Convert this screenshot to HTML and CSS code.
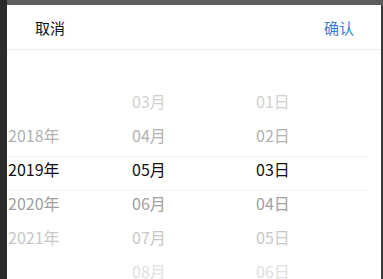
FILE: index.html
```html
<!DOCTYPE html>
<html lang="zh-CN">
<head>
    <meta charset="UTF-8">
    <meta name="viewport" content="width=device-width, initial-scale=1.0">
    <title>日期选择</title>
    <link rel="stylesheet" href="styles.css">
</head>
<body>
    <div class="frame">
        <div class="rail"></div>
        <div class="main">
            <div class="topbar"></div>
            <div class="panel">
                <div class="toolbar">
                    <a href="#" class="btn cancel">取消</a>
                    <a href="#" class="btn confirm">确认</a>
                </div>
                <div class="wheel">
                    <div class="band"></div>
                    <ul class="col col-year">
                        <li class="r-2"></li>
                        <li class="r-1">2018年</li>
                        <li class="r0">2019年</li>
                        <li class="r1">2020年</li>
                        <li class="r2">2021年</li>
                        <li class="r3"></li>
                    </ul>
                    <ul class="col">
                        <li class="r-2">03月</li>
                        <li class="r-1">04月</li>
                        <li class="r0">05月</li>
                        <li class="r1">06月</li>
                        <li class="r2">07月</li>
                        <li class="r3">08月</li>
                    </ul>
                    <ul class="col">
                        <li class="r-2">01日</li>
                        <li class="r-1">02日</li>
                        <li class="r0">03日</li>
                        <li class="r1">04日</li>
                        <li class="r2">05日</li>
                        <li class="r3">06日</li>
                    </ul>
                </div>
            </div>
        </div>
    </div>
</body>
</html>
```

FILE: styles.css
```css
html, body { margin: 0; padding: 0; height: 100%; overflow: hidden; }
body { font-family: "Noto Sans CJK SC", "Noto Sans", sans-serif; background-color: #2b2b2b; }
.frame { display: flex; height: 100%; }
.rail { width: 7px; flex-shrink: 0; background-color: #2b2b2b; }
.main { flex: 1; display: flex; flex-direction: column; background-color: #3c3c3c; }
.topbar { height: 5px; flex-shrink: 0; background-color: #5e5e5e; }
.panel { flex: 1; min-height: 0; background: white; margin-right: 2px; }

.toolbar { height: 44px; display: flex; justify-content: space-between; align-items: center; padding: 0 27px 0 28px; border-bottom: 1px solid #eeeeee; }
.btn { font-size: 15px; text-decoration: none; }
.cancel { color: #111; }
.confirm { color: #3a7bd5; }

.wheel { position: relative; display: grid; grid-template-columns: 80px 124px 124px 1fr; padding-top: 34px; }
.band { position: absolute; top: 106px; left: 1px; right: 13px; height: 33px; border-top: 1px solid #f2f2f2; border-bottom: 1px solid #f2f2f2; }
.col { list-style: none; margin: 0; padding: 0; text-align: center; }
.col-year { text-align: left; padding-left: 1px; }
.col li { height: 34px; line-height: 34px; font-size: 16px; }
.r-2 { color: #d2d2d2; }
.r-1 { color: #b2b2b2; }
.r0 { color: #111; }
.r1 { color: #a0a0a0; }
.r2 { color: #c8c8c8; }
.r3 { color: #e0e0e0; }
```
